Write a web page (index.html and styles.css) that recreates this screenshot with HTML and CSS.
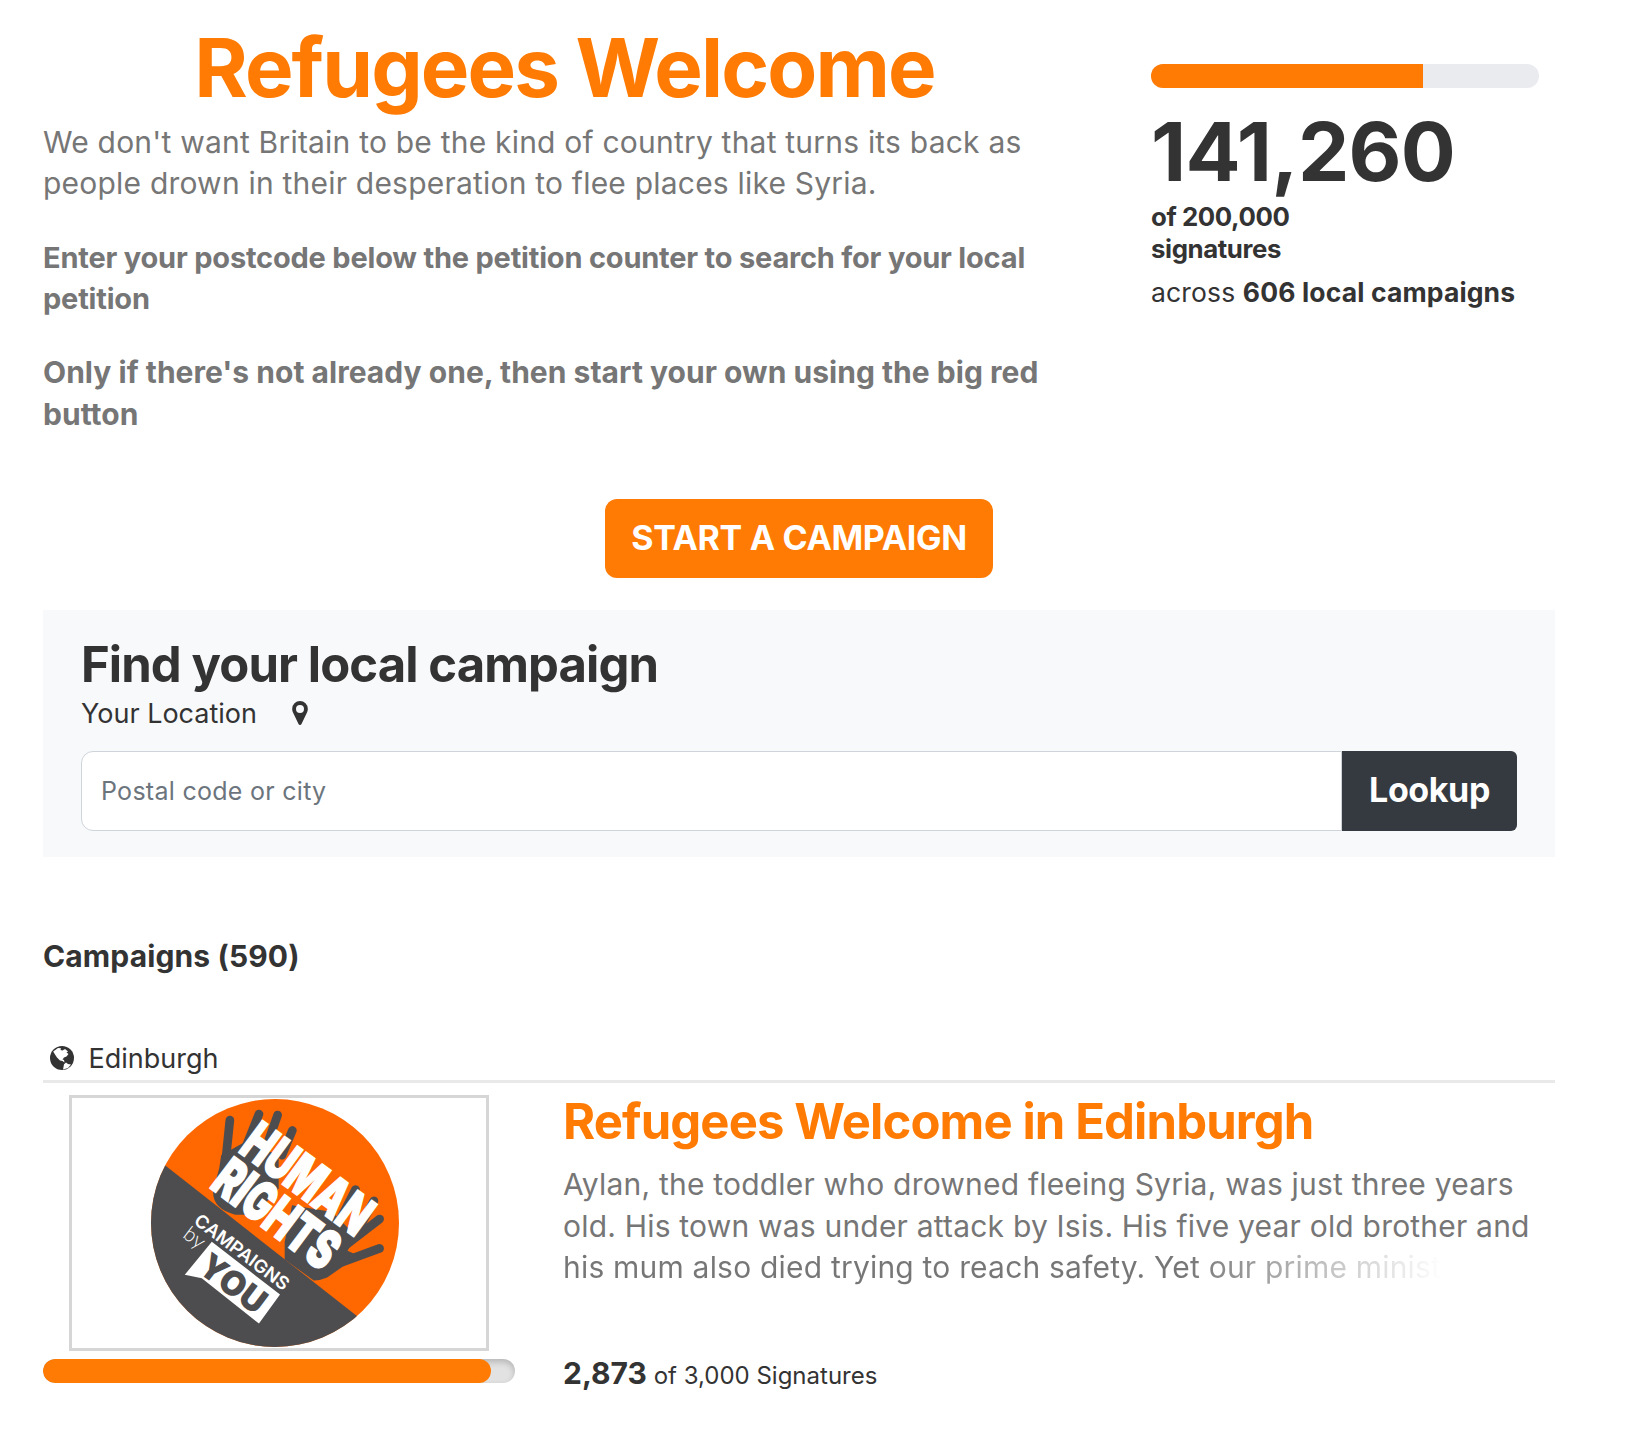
FILE: index.html
```html
<!DOCTYPE html>
<html lang="en">
<head>
<meta charset="utf-8">
<title>Refugees Welcome</title>
<link rel="stylesheet" href="styles.css">
</head>
<body>
<main class="page">
  <section class="hero">
    <div class="intro">
      <h1 class="title">Refugees Welcome</h1>
      <p class="lead">We don't want Britain to be the kind of country that turns its back as<br>people drown in their desperation to flee places like Syria.</p>
      <p class="lead lead-strong enter">Enter your postcode below the petition counter to search for your local<br>petition</p>
      <p class="lead lead-strong only">Only if there's not already one, then start your own using the big red<br>button</p>
    </div>
    <aside class="counter">
      <div class="meter"><div class="meter-fill" style="width:70.1%"></div></div>
      <div class="total">141,260</div>
      <div class="goal">of 200,000<br>signatures</div>
      <div class="across">across <b>606 local campaigns</b></div>
    </aside>
  </section>

  <a class="start" href="#">START A CAMPAIGN</a>

  <section class="finder">
    <h2 class="finder-title">Find your local campaign</h2>
    <label class="finder-label" for="loc"><span>Your Location</span>
      <svg class="pin" viewBox="0 0 16 24"><path fill-rule="evenodd" d="M8 0a7.8 7.8 0 0 0-7.8 7.800c0 1.500.2 2.500.8 3.700l5.500 11.500a1.700 1.700 0 0 0 3 0L15 11.500c.6-1.200.8-2.200.8-3.700A7.800 7.800 0 0 0 8 0zm0 4a4 4 0 1 1 0 8 4 4 0 0 1 0-8z"/></svg>
    </label>
    <div class="finder-row">
      <input id="loc" class="field" type="text" placeholder="Postal code or city">
      <button class="lookup" type="button">Lookup</button>
    </div>
  </section>

  <h3 class="list-title">Campaigns (590)</h3>

  <div class="place">
    <svg class="globe" viewBox="0 0 24 24"><circle cx="12" cy="12" r="12"/><path class="land" d="M3.200 5.500L8 2l3 .2-.5 1.800 2 .4L15 3l3 2.500-1.500 1 2 1.500-2 2.500-2.500 1-1.500 2 1.500.5.500 2.500-2-1.500-2.500-.5L7 11.500 5 8.500zM14 18.200l2-1.700 2 1.500 3 .5-3 3.500-5 1.500.5-2.500z"/></svg>
    <span>Edinburgh</span>
  </div>

  <article class="card">
    <div class="media">
      <div class="thumb">
        <svg class="logo" viewBox="18 12 742 742">
          <defs><clipPath id="disc"><circle cx="389" cy="383" r="371"/></clipPath></defs>
          <g clip-path="url(#disc)">
            <rect width="780" height="765" fill="#ff6700"/>
            <path class="dark" d="M0 163L780 776H0z"/>
          </g>
          <g class="finger">
            <path d="M254 75L241 200"/><path d="M341 57L300 160"/><path d="M397 60L365 150"/><path d="M441 106L410 180"/>
            <path d="M630 283L585 370"/><path d="M685 317L640 400"/><path d="M702 371L600 450"/><path d="M702 459L590 500"/>
          </g>
          <path class="dark" d="M228 180L222 220 204 285Q200 340 270 358L330 358 400 280 400 180 300 140z"/>
          <path class="dark" d="M440 330L560 350 610 400 632 420 606 466 640 482 608 502 545 546Q525 555 505 555L418 492V440z"/>
          <g class="shout">
            <text transform="translate(276 168) rotate(36.300)" font-size="164" textLength="438" lengthAdjust="spacingAndGlyphs">HUMAN</text>
            <text transform="translate(190 275) rotate(37)" font-size="164" textLength="424" lengthAdjust="spacingAndGlyphs">RIGHTS</text>
          </g>
          <text class="camp" transform="translate(143 383) rotate(37)" font-size="54" textLength="340" lengthAdjust="spacingAndGlyphs">CAMPAIGNS</text>
          <text class="by" transform="translate(110 424) rotate(37)" font-size="62">by</text>
          <path fill="#fff" d="M200 439L404 597 341 684 170 548 119 538z"/>
          <text class="you" transform="translate(153 526) rotate(37)" font-size="102" textLength="222" lengthAdjust="spacingAndGlyphs">YOU</text>
        </svg>
      </div>
      <div class="progress"><div class="progress-fill" style="width:95%"></div></div>
    </div>
    <div class="body">
      <h2 class="card-title">Refugees Welcome in Edinburgh</h2>
      <p class="desc">Aylan, the toddler who drowned fleeing Syria, was just three years<br>old. His town was under attack by Isis. His five year old brother and<br><span class="fade">his mum also died trying to reach safety. Yet our prime minister</span></p>
      <p class="signed"><b>2,873</b> <span>of 3,000 Signatures</span></p>
    </div>
  </article>
</main>
</body>
</html>
```
FILE: styles.css
```css
* { box-sizing: border-box; }
body { margin: 0; background: #fff; color: #333; font-family: Inter, sans-serif; }
h1, h2, h3, p { margin: 0; }
b { font-weight: 700; }
.page { width: 1512px; margin-left: 43px; white-space: nowrap; }
.hero { display: flex; height: 499px; }
.intro { width: 1108px; padding-top: 18px; }
.title { width: 1043px; text-align: center; color: #ff7b04; font-size: 81.600px; line-height: 100px; font-weight: 700; letter-spacing: -1.880px; }
.lead { color: #767676; font-size: 30px; line-height: 41.500px; padding-top: 3.500px; letter-spacing: .21px; }
.lead-strong { font-weight: 700; letter-spacing: .03px; }
.enter { margin-top: 28.500px; font-size: 29px; letter-spacing: -.2px; }
.only { margin-top: 29px; }
.counter { width: 388px; padding-top: 64px; }
.meter { height: 24px; border-radius: 12px; overflow: hidden; background: #eaebef; }
.meter-fill { height: 100%; background: #ff7b04; }
.total { font-size: 81.600px; line-height: 100px; margin-top: 14px; font-weight: 700; letter-spacing: -.7px; }
.goal { font-size: 25.800px; line-height: 32.300px; margin-top: -1px; font-weight: 700; letter-spacing: -.4px; }
.across { font-size: 26.500px; line-height: 34px; margin-top: 9px; letter-spacing: .14px; }
.start { display: flex; align-items: center; justify-content: center; width: 388px; height: 79px; padding-bottom: 2px; margin-left: 562px; border-radius: 12px; background: #ff7b04; color: #fff; text-decoration: none; font-size: 34px; font-weight: 700; letter-spacing: -.32px; }
.finder { margin-top: 32px; height: 247px; padding: 28px 38px 0; background: #f8f9fb; }
.finder-title { font-size: 49px; line-height: 54px; font-weight: 700; letter-spacing: -.9px; }
.finder-label { display: flex; align-items: center; height: 42px; font-size: 27px; gap: 35px; }
.pin { width: 16px; height: 24px; fill: #333; }
.finder-row { display: flex; margin-top: 17px; height: 80px; }
.field { flex: 1; border: 1px solid #ced4da; border-radius: 12px 0 0 12px; padding: 0 19px; font: 25px Inter, sans-serif; letter-spacing: .28px; color: #333; background: #fff; }
.field::placeholder { color: #6c757d; opacity: 1; }
.lookup { width: 175px; border: 0; border-radius: 0 6px 6px 0; padding-bottom: 4px; background: #343a40; color: #fff; font: 700 34px Inter, sans-serif; letter-spacing: -.4px; }
.list-title { margin-top: 79px; font-size: 30px; line-height: 40px; font-weight: 700; letter-spacing: .12px; }
.place { display: flex; align-items: center; gap: 14.500px; margin-top: 62px; height: 45px; padding: 0 0 2px 7px; border-bottom: 3px solid #e9e9e9; font-size: 27px; }
.globe { width: 24px; height: 24px; fill: #333; }
.land { fill: #fff; }
.card { display: flex; gap: 48px; padding-top: 12px; }
.media { width: 472px; }
.thumb { display: flex; justify-content: center; align-items: center; width: 420px; height: 256px; margin-left: 26px; border: 3px solid #d6d6d6; }
.logo { width: 248px; height: 248px; margin-right: 8px; overflow: visible; }
.dark { fill: #4d4d4f; }
.finger { stroke: #4d4d4f; stroke-width: 26; stroke-linecap: round; }
.shout { fill: #fff; stroke: #fff; stroke-width: 5; font-weight: 900; }
.camp { fill: #fff; font-weight: 600; }
.by { fill: #fff; font-family: Lato, sans-serif; font-weight: 300; }
.you { fill: #4d4d4f; font-weight: 900; }
.progress { height: 24px; margin-top: 8px; border-radius: 12px; overflow: hidden; background: #e2e2e2; box-shadow: inset 0 3px 6px rgba(0,0,0,.2); }
.progress-fill { height: 100%; border-radius: 12px; background: #ff7b04; }
.card-title { color: #ff7b04; font-size: 49px; line-height: 54px; font-weight: 700; letter-spacing: -.880px; }
.desc { margin-top: 15px; color: #767676; font-size: 30px; line-height: 41.500px; letter-spacing: .2px; }
.fade { display: inline-block; vertical-align: top; background: linear-gradient(90deg, #767676 620px, rgba(118,118,118,0) 880px); -webkit-background-clip: text; background-clip: text; color: transparent; }
.signed { margin-top: 66px; line-height: 36px; font-size: 24px; }
.signed b { font-size: 30px; }
```
